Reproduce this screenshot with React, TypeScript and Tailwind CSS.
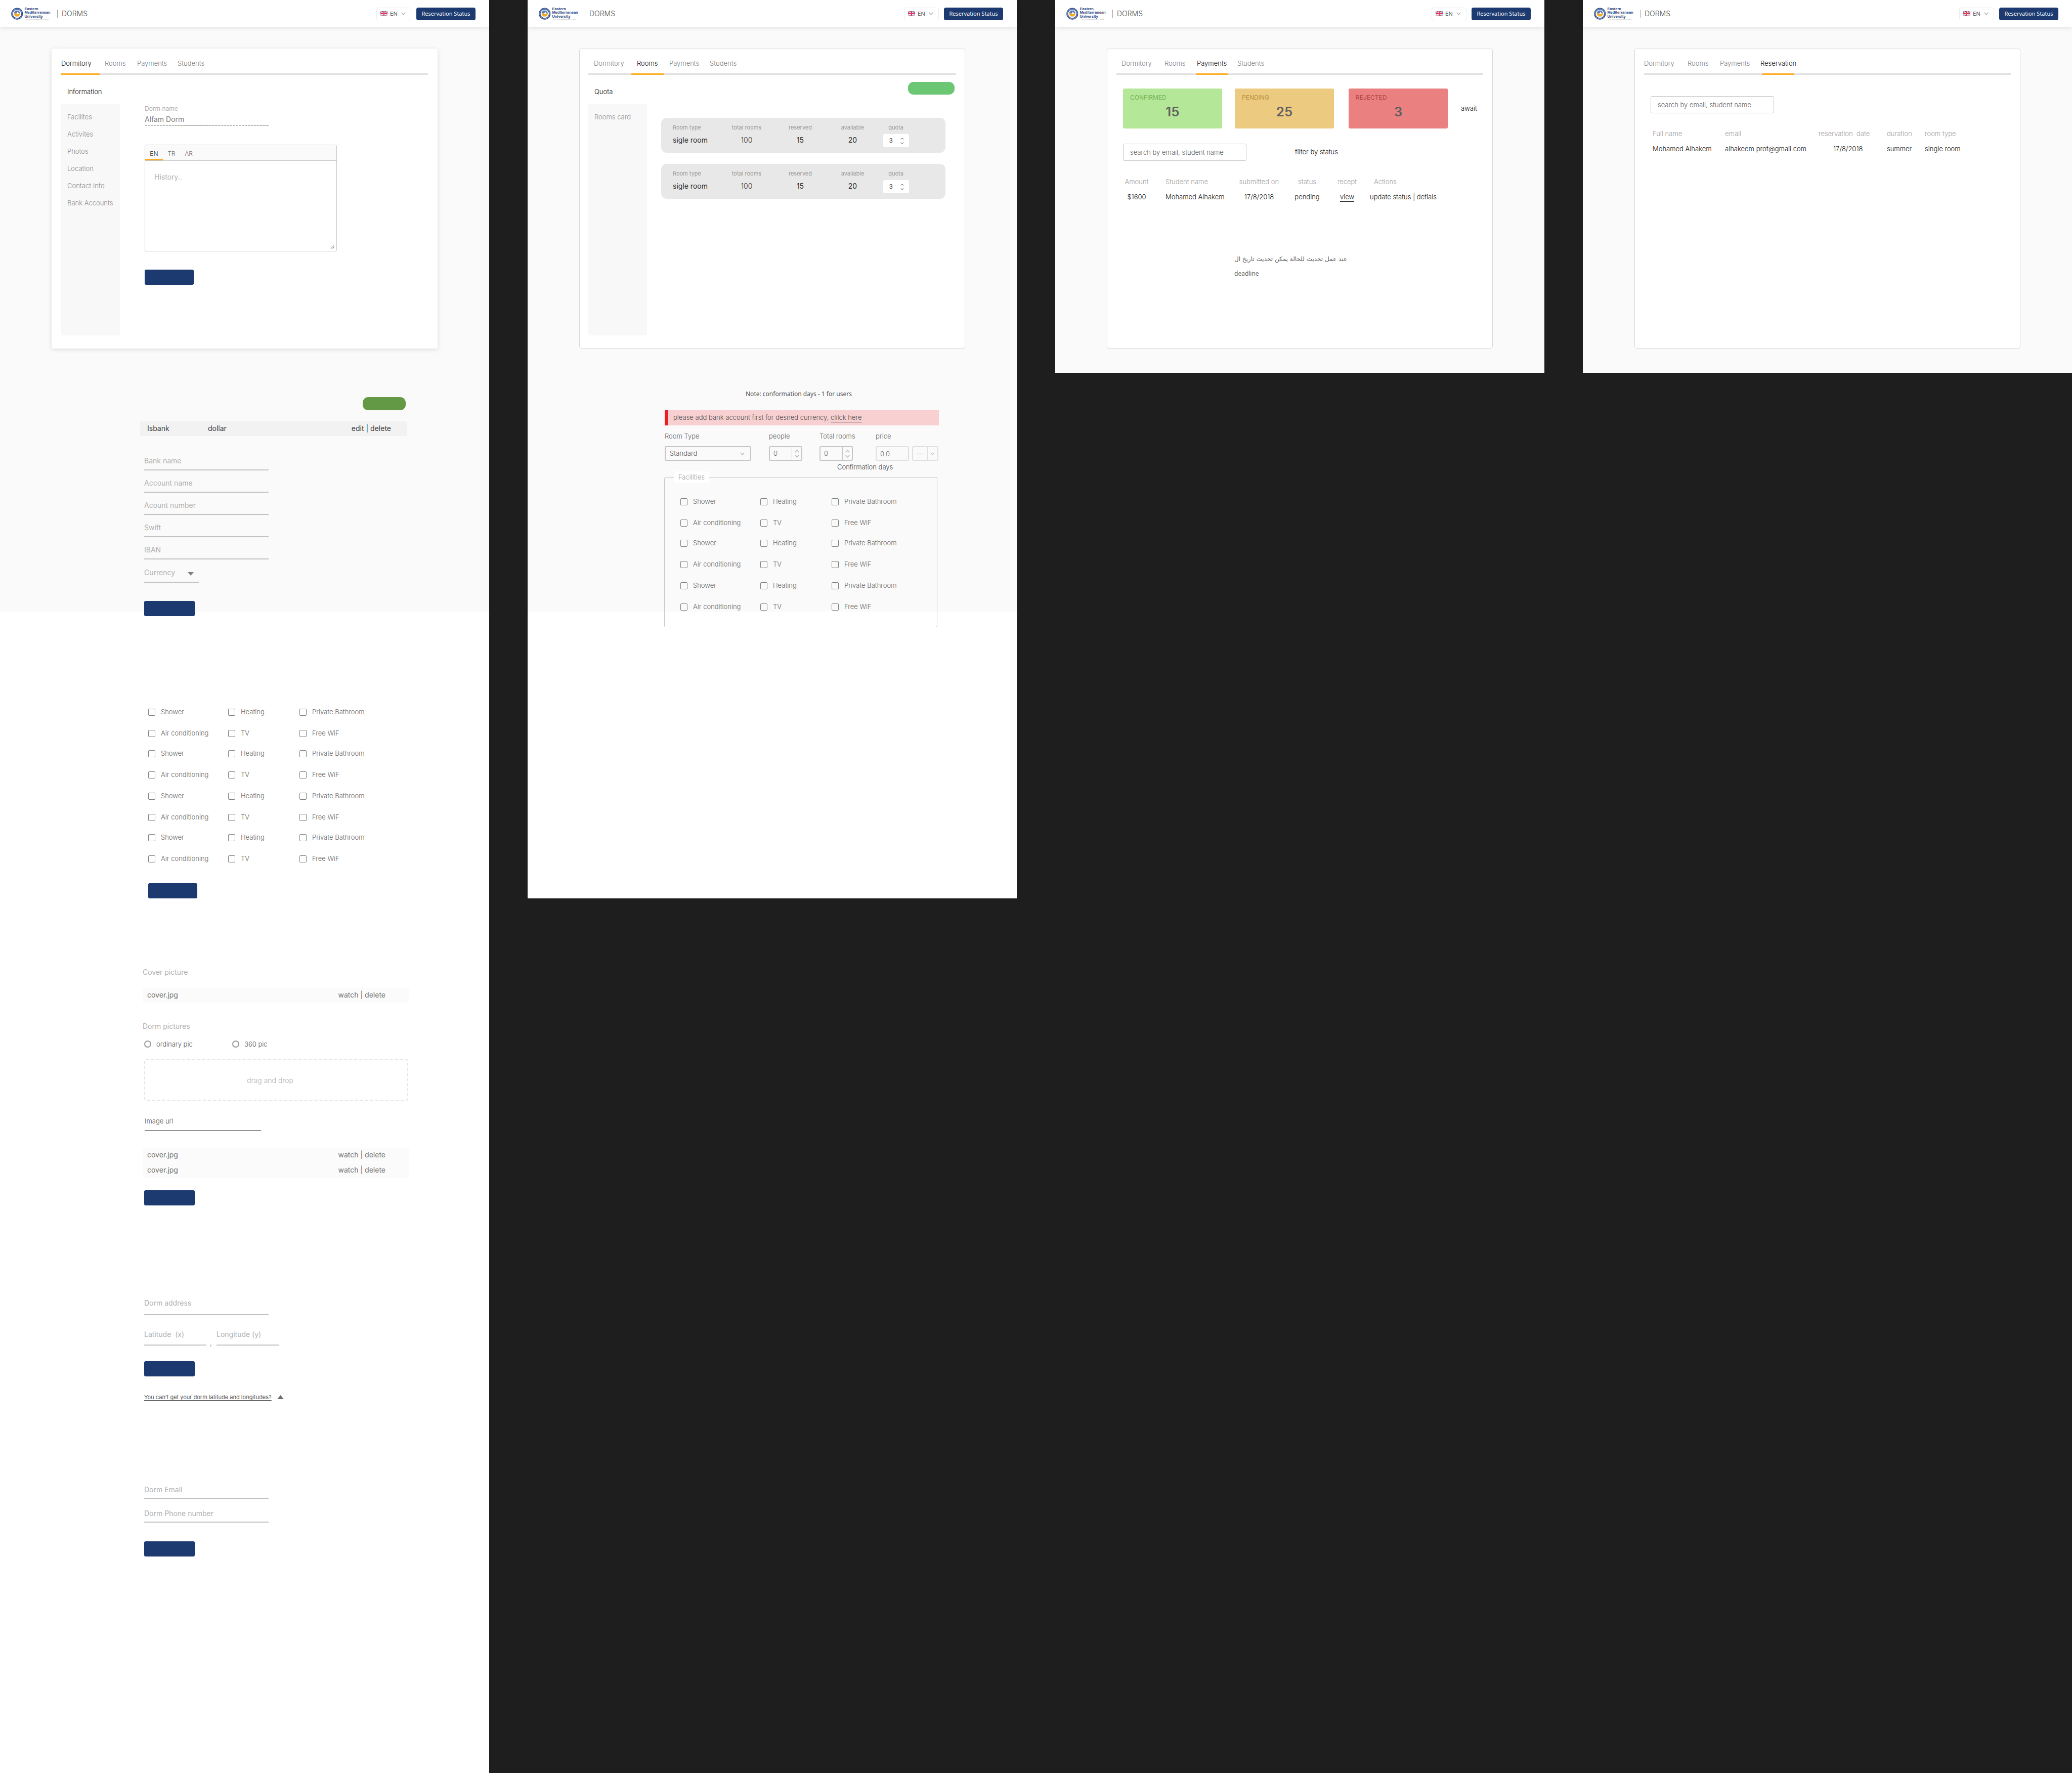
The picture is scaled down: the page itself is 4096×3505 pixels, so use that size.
import React from "react";

const FACILITY_ROWS = [
  ["Shower", "Heating", "Private Bathroom"],
  ["Air conditioning", "TV", "Free WiF"],
];

function Chevron({ up, className }: { up?: boolean; className: string }) {
  return (
    <svg viewBox="0 0 12 8" className={`shrink-0 ${className}`} fill="none" stroke="currentColor" strokeWidth="1.800" aria-hidden="true">
      <path d={up ? "M1 7l5-5.500L11 7" : "M1 1l5 5.500L11 1"} />
    </svg>
  );
}

function Emblem() {
  return (
    <svg viewBox="0 0 105 36" className="h-[27px] w-[79px] shrink-0" role="img" aria-label="Eastern Mediterranean University">
      <circle cx="15.5" cy="17.5" r="15.4" fill="#2d4f8e" />
      <circle cx="15.5" cy="17.5" r="13" fill="none" stroke="#a9b9d8" strokeWidth="1.600" strokeDasharray="1.4 1" />
      <circle cx="15.5" cy="17.5" r="11" fill="#fff" />
      <path d="M11 9h9l4 7-2 3-5-7-3 5h-6l-1-2z" fill="#5b7cb8" />
      <path d="M8.500 13.500l3.500 5h7l3-4 2 3.500-4 6.500h-9l-4-6.500z" fill="#f7a81c" />
      <rect x="12.500" y="25.300" width="6" height="1" fill="#5b7cb8" />
      <g fill="#1f3f80" fontFamily="'Liberation Sans', Arial, sans-serif" fontWeight="700" fontSize="10">
        <text x="35" y="7.800">Eastern</text>
        <text x="35" y="17.800">Mediterranean</text>
        <text x="35" y="27.600">University</text>
      </g>
      <text x="35" y="35" fill="#a8a8a8" fontFamily="'Liberation Serif', serif" fontStyle="italic" fontSize="5">
        “For Your International Career”
      </text>
    </svg>
  );
}

function Flag() {
  return (
    <svg viewBox="0 0 28 20" className="h-[10px] w-[14px] shrink-0" aria-hidden="true">
      <rect width="28" height="20" fill="#4a5fae" />
      <path d="M0 0l28 20M28 0L0 20" stroke="#fff" strokeWidth="4" />
      <path d="M0 0l28 20M28 0L0 20" stroke="#e8455a" strokeWidth="1.600" />
      <path d="M14 0v20M0 10h28" stroke="#fff" strokeWidth="6.500" />
      <path d="M14 0v20M0 10h28" stroke="#e8354c" strokeWidth="4" />
    </svg>
  );
}

function Header() {
  return (
    <header className="flex h-[54px] items-center bg-white pl-[22px] pr-[27px] shadow-[0_1px_8px_rgba(0,0,0,0.12)]">
      <a href="#home" className="flex items-center">
        <Emblem />
        <span className="ml-3 h-4 w-px bg-[#a0a0a0]" />
        <span className="ml-2 text-[14px] font-light leading-5 text-[#505050]">DORMS</span>
      </a>
      <label className="ml-auto flex h-[25px] w-[69px] items-center rounded-sm border border-[#ececec] px-[7px]">
        <Flag />
        <select aria-label="Language" className="ml-[5px] w-[22px] appearance-none bg-transparent text-[11px] text-[#555] outline-none">
          <option>EN</option>
        </select>
        <Chevron className="h-[6px] w-[9px] text-[#aaa]" />
      </label>
      <button className="ml-[10px] h-[25px] w-[117px] rounded-sm bg-[#1c3a6f] font-['Noto_Sans',sans-serif] text-[11px] text-white">
        Reservation Status
      </button>
    </header>
  );
}

type Tab = { label: string; cell: string };

function Tabs({ tabs, active, bar }: { tabs: Tab[]; active: number; bar: string }) {
  return (
    <nav className="pt-[19px]">
      <div className="flex text-[13px] font-light leading-5 text-[#808080]">
        {tabs.map((t, i) => (
          <a key={t.label} href={"#" + t.label} className={`${t.cell} ${i === active ? "text-[#111]" : ""}`}>
            {t.label}
          </a>
        ))}
      </div>
      <div className="mt-[10px] h-[3px] bg-[#e0e0e0]">
        <div className={`h-full bg-[#fdad26] ${bar}`} />
      </div>
    </nav>
  );
}

function Board({ className, children }: { className?: string; children: React.ReactNode }) {
  return (
    <section className={`min-w-0 flex-1 bg-[linear-gradient(#fafafa_1209px,#ffffff_1209px)] ${className ?? ""}`}>
      <Header />
      {children}
    </section>
  );
}

function Card({ className, children }: { className: string; children: React.ReactNode }) {
  return <div className={`mx-[102px] mt-[42px] min-h-[593px] rounded-[4px] bg-white ${className}`}>{children}</div>;
}

function SideMenu({ title, items }: { title: string; items: string[] }) {
  return (
    <aside className="w-[116px] shrink-0 text-[13px] font-light leading-5">
      <h2 className="mt-[23px] pl-3 text-[#111]">{title}</h2>
      <ul className="mt-[14px] h-[458px] space-y-[14px] bg-[#f8f8f8] pl-3 pt-4 text-[#8c8c8c]">
        {items.map((i) => (
          <li key={i}>
            <a href={"#" + i} className="whitespace-nowrap">{i}</a>
          </li>
        ))}
      </ul>
    </aside>
  );
}

function SubmitButton({ label, className }: { label: string; className: string }) {
  return <button aria-label={label} className={`block h-[30px] rounded-[3px] bg-[#1c3a6f] ${className}`} />;
}

function Field({ label, className }: { label: string; className: string }) {
  return (
    <input
      aria-label={label}
      placeholder={label}
      className={`block rounded-none border-b-2 border-[#c2c2c2] bg-transparent text-[14px] leading-5 text-[#606060] outline-none placeholder:text-[#b0b0b0] ${className}`}
    />
  );
}

function Facilities({ id, rows }: { id: string; rows: number }) {
  return (
    <div>
      {Array.from({ length: rows }, (_, r) => (
        <div
          key={r}
          className={`grid grid-cols-[158px_141px_1fr] ${r === 0 ? "" : r % 4 === 2 ? "mt-5" : "mt-[22px]"}`}
        >
          {FACILITY_ROWS[r % 2].map((name, c) => (
            <label key={c} htmlFor={`${id}-${r}-${c}`} className="flex h-5 items-center whitespace-nowrap text-[13px] font-light text-[#666]">
              <input id={`${id}-${r}-${c}`} type="checkbox" className="mr-[11px] size-[14px] shrink-0 appearance-none rounded-[2px] border border-[#808080]" />
              {name}
            </label>
          ))}
        </div>
      ))}
    </div>
  );
}

function FileRow({ className }: { className?: string }) {
  return (
    <li className={`flex h-[29px] items-center bg-[#fbfbfb] pb-[2px] pl-[9px] pr-[47px] text-[14px] text-[#707070] ${className ?? ""}`}>
      <span className="mr-auto">cover.jpg</span>
      <button>watch</button>
      <span className="whitespace-pre"> | </span>
      <button>delete</button>
    </li>
  );
}

function DormitoryBoard() {
  return (
    <Board className="self-stretch">
      <Card className="px-[19px] shadow-[0_2px_10px_rgba(0,0,0,0.12)]">
        <Tabs
          active={0}
          bar="w-[76px]"
          tabs={[
            { label: "Dormitory", cell: "w-[86px]" },
            { label: "Rooms", cell: "w-[64px]" },
            { label: "Payments", cell: "w-[80px]" },
            { label: "Students", cell: "w-[80px]" },
          ]}
        />
        <div className="flex">
          <SideMenu title="Information" items={["Facilites", "Activites", "Photos", "Location", "Contact Info", "Bank Accounts"]} />
          <form className="ml-[49px] mt-[57px]">
            <label htmlFor="dorm-name" className="block text-[12px] leading-5 text-[#adadad]">Dorm name</label>
            <input
              id="dorm-name"
              defaultValue="Alfam Dorm"
              className="block h-[22px] w-[246px] pb-[2px] text-[14px] text-[#808080] outline-none"
            />
            <div className="h-[2px] w-[246px] bg-[repeating-linear-gradient(90deg,#bcbcbc_0px,#bcbcbc_5px,#ffffff_5px,#ffffff_6px)]" />
            <div className="relative mt-[37px] w-[380px] rounded-[3px] border border-[#c6c6c6]">
              <div className="flex h-[31px] border-b border-[#c6c6c6] bg-[#fafafa] text-[12px] font-light text-[#707070]">
                <button type="button" className="w-[35px] border-b-[3px] border-[#fdad26] pt-[7px] text-[#222]">EN</button>
                <button type="button" className="w-[34px] pt-1">TR</button>
                <button type="button" className="w-[34px] pt-1">AR</button>
              </div>
              <textarea aria-label="History" placeholder="History.." className="block h-[178px] w-full resize-none px-[18px] pt-[22px] text-[14px] leading-5 outline-none placeholder:text-[#b0b0b0]" />
              <svg viewBox="0 0 8 8" className="absolute bottom-1 right-1 size-2" aria-hidden="true">
                <path d="M1 7.500L7.500 1M4.500 7.500l3-3" stroke="#555" strokeWidth="0.900" />
              </svg>
            </div>
            <SubmitButton label="Save information" className="mt-9 w-[97px]" />
          </form>
        </div>
      </Card>

      <div className="ml-[277px] mr-[162px] mt-24">
        <button aria-label="Add bank account" className="ml-auto mr-[3px] block h-[26px] w-[85px] rounded-[11px] bg-[#639844]" />
        <div className="mt-[22px] flex h-[29px] items-center bg-[#f2f2f2] pb-[2px] pl-[14px] pr-8 text-[14px] text-[#3c3c3c]">
          <span className="w-[120px]">Isbank</span>
          <span className="mr-auto">dollar</span>
          <button>edit</button>
          <span className="whitespace-pre"> | </span>
          <button>delete</button>
        </div>
        <form className="ml-2 mt-[38px]">
          <div className="space-y-[14px]">
            {["Bank name", "Account name", "Acount number", "Swift", "IBAN"].map((f) => (
              <Field key={f} label={f} className="h-[30px] w-[246px] pb-2" />
            ))}
          </div>
          <div className="relative mt-4 w-[108px]">
            <select aria-label="Currency" className="block h-[30px] w-full appearance-none border-b-2 border-[#c2c2c2] bg-transparent pb-2 text-[14px] leading-5 text-[#b0b0b0] outline-none">
              <option>Currency</option>
            </select>
            <svg viewBox="0 0 12 7" className="pointer-events-none absolute right-[10px] top-[9px] h-[7px] w-3" aria-hidden="true">
              <path d="M0 0h12L6 7z" fill="#808080" />
            </svg>
          </div>
          <SubmitButton label="Save bank account" className="mt-9 w-[100px]" />
        </form>
      </div>

      <form className="ml-[293px] mt-[180px]">
        <Facilities id="dorm" rows={8} />
        <SubmitButton label="Save facilities" className="mt-[38px] w-[97px]" />
      </form>

      <form className="ml-[282px] mr-[158px] mt-[136px]">
        <h3 className="text-[14px] leading-5 text-[#b0b0b0]">Cover picture</h3>
        <ul className="mt-[21px]">
          <FileRow />
        </ul>
        <h3 className="mt-[37px] text-[14px] leading-5 text-[#b0b0b0]">Dorm pictures</h3>
        <div className="ml-[3px] mt-[15px] flex text-[13px] font-light leading-5 text-[#555]">
          <label className="flex w-[174px] items-center">
            <input type="radio" name="pic" className="mr-[10px] size-[14px] appearance-none rounded-full border-2 border-[#999]" />
            ordinary pic
          </label>
          <label className="flex items-center">
            <input type="radio" name="pic" className="mr-[10px] size-[14px] appearance-none rounded-full border-2 border-[#999]" />
            360 pic
          </label>
        </div>
        <div className="ml-[3px] mr-[2px] mt-5 flex h-[82px] items-center justify-center rounded-[4px] border-2 border-dashed border-[#e6e6e6] pr-6 text-[14px] font-light text-[#b0b0b0]">
          drag and drop
        </div>
        <input
          aria-label="Image url"
          placeholder="Image url"
          className="ml-1 mt-[30px] block h-[30px] w-[230px] border-b-2 border-[#929292] bg-transparent pb-2 text-[13px] font-light outline-none placeholder:text-[#555]"
        />
        <ul className="mt-[33px]">
          <FileRow />
          <FileRow className="mt-px" />
        </ul>
        <SubmitButton label="Save photos" className="ml-[3px] mt-[25px] w-[100px]" />
      </form>

      <form className="ml-[285px] mt-[183px]">
        <Field label="Dorm address" className="h-[34px] w-[246px] pb-[14px]" />
        <div className="mt-7 flex items-end text-[#999]">
          <Field label="Latitude  (x)" className="h-8 w-[123px] pb-3" />
          <span className="w-5 pl-[7px] text-[14px] leading-3">,</span>
          <Field label="Longitude (y)" className="h-8 w-[123px] pb-3" />
        </div>
        <SubmitButton label="Save location" className="mt-[31px] w-[100px]" />
        <a href="#help" className="mt-[31px] flex items-center text-[11px] leading-5 text-[#555]">
          <span className="underline decoration-1 underline-offset-2">You can’t get your dorm latitude and longitudes?</span>
          <svg viewBox="0 0 13 8" className="ml-[11px] h-2 w-[13px]" aria-hidden="true">
            <path d="M0 8h13L6.500 0z" fill="#6b6b6b" />
          </svg>
        </a>
      </form>

      <form className="ml-[285px] mt-[163px]">
        <Field label="Dorm Email" className="h-7 w-[246px] pb-2" />
        <Field label="Dorm Phone number" className="mt-[19px] h-7 w-[246px] pb-2" />
        <SubmitButton label="Save contact info" className="mt-[37px] w-[100px]" />
      </form>
    </Board>
  );
}

function QuotaCard({ id }: { id: string }) {
  return (
    <div className="grid h-[69px] grid-cols-[94px_104px_108px_99px_72px] rounded-[11px] bg-[#e8e8e8] pl-[23px] pt-[11px] text-center">
      {["Room type", "total rooms", "reserved", "avaliable"].map((l, i) => (
        <div key={l} className={i === 0 ? "text-left" : ""}>
          <div className="text-[11px] leading-4 text-[#999]">{l}</div>
          <div className={`mt-[5px] text-[14px] leading-6 ${i === 1 ? "font-light text-[#333]" : "text-[#2c2c2c]"}`}>
            {["sigle room", "100", "15", "20"][i]}
          </div>
        </div>
      ))}
      <div>
        <label htmlFor={id} className="block text-[11px] leading-4 text-[#999]">quota</label>
        <div className="mx-auto mt-[5px] flex h-[26px] w-[51px] items-center rounded-[3px] bg-white pl-3 pr-[10px]">
          <input id={id} type="text" inputMode="numeric" defaultValue="3" className="w-4 min-w-0 bg-transparent text-left text-[12px] text-[#444] outline-none" />
          <span className="ml-auto flex flex-col gap-[5px] text-[#333]">
            <button aria-label="Increase quota"><Chevron up className="h-1 w-[7px]" /></button>
            <button aria-label="Decrease quota"><Chevron className="h-1 w-[7px]" /></button>
          </span>
        </div>
      </div>
    </div>
  );
}

function Stepper({ id, label }: { id: string; label: string }) {
  return (
    <div>
      <label htmlFor={id} className="block leading-5">{label}</label>
      <div className="mt-[10px] flex h-[29px] w-[66px] rounded-[3px] border-2 border-[#c6c6c6]">
        <input id={id} type="text" inputMode="numeric" defaultValue="0" className="w-[43px] min-w-0 bg-transparent pl-[7px] outline-none" />
        <span className="flex flex-1 flex-col items-center justify-center gap-1 border-l border-[#c6c6c6] text-[#b3b3b3]">
          <button type="button" aria-label={"Increase " + label} className="flex"><Chevron up className="h-[6px] w-[9px]" /></button>
          <button type="button" aria-label={"Decrease " + label} className="flex"><Chevron className="h-[6px] w-[9px]" /></button>
        </span>
      </div>
    </div>
  );
}

function RoomsBoard() {
  return (
    <Board className="min-h-[1776px]">
      <Card className="px-[18px] outline outline-1 -outline-offset-1 outline-[#d8d8d8]">
        <Tabs
          active={1}
          bar="ml-[85px] w-[64px]"
          tabs={[
            { label: "Dormitory", cell: "ml-[11px] w-[85px]" },
            { label: "Rooms", cell: "w-[64px]" },
            { label: "Payments", cell: "w-[80px]" },
            { label: "Students", cell: "w-[80px]" },
          ]}
        />
        <div className="flex">
          <SideMenu title="Quota" items={["Rooms card"]} />
          <div className="min-w-0 flex-1">
            <button aria-label="Save quota" className="ml-auto mr-[3px] mt-[14px] block h-[25px] w-[92px] rounded-[11px] bg-[#6bc774]" />
            <div className="ml-7 mr-[21px] mt-[46px] space-y-[22px]">
              <QuotaCard id="quota-1" />
              <QuotaCard id="quota-2" />
            </div>
          </div>
        </div>
      </Card>

      <p className="ml-[431px] mt-20 font-['Noto_Sans',sans-serif] text-[12px] leading-5 text-[#555]">
        Note: conformation days - 1 for users
      </p>
      <p className="ml-[271px] mr-[154px] mt-[22px] h-[30px] border-l-[6px] border-[#ed1c24] bg-[#f8d0d1] pl-[11px] text-[13px] font-light leading-[28px] text-[#505050]">
        please add bank account first for desired currency,{" "}
        <a href="#bank" className="underline decoration-1 underline-offset-4">clilck here</a>
      </p>
      <form>
        <div className="ml-[271px] mt-[11px] grid grid-cols-[206px_100px_111px_72px_52px] text-[13px] font-light text-[#666]">
          <div>
            <label htmlFor="room-type" className="block leading-5">Room Type</label>
            <div className="relative mt-[10px] w-[171px]">
              <select id="room-type" className="block h-[29px] w-full appearance-none rounded-[3px] border-2 border-[#c6c6c6] bg-transparent pl-2 text-[#555] outline-none">
                <option>Standard</option>
              </select>
              <Chevron className="pointer-events-none absolute right-[13px] top-3 h-[6px] w-[9px] text-[#b3b3b3]" />
            </div>
          </div>
          <Stepper id="people" label="people" />
          <Stepper id="total-rooms" label="Total rooms" />
          <div>
            <label htmlFor="price" className="block leading-5">price</label>
            <input id="price" defaultValue="0.0" className="mt-[10px] block h-[29px] w-[66px] rounded-[3px] border-2 border-[#e0e0e0] bg-transparent pl-[7px] outline-none" />
          </div>
          <div className="relative mt-[30px] flex h-[29px] rounded-[3px] border-2 border-[#e0e0e0] text-[#c0c0c0]">
            <select aria-label="Price currency" className="w-full appearance-none bg-transparent pl-[7px] font-medium outline-none">
              <option>--</option>
            </select>
            <span className="pointer-events-none absolute inset-y-0 right-0 flex w-5 items-center justify-center border-l border-[#e0e0e0]">
              <Chevron className="h-[6px] w-[9px]" />
            </span>
          </div>
        </div>
        <p className="ml-[612px] mt-1 text-[13px] font-light leading-[17px] text-[#444]">Confirmation days</p>
        <fieldset className="ml-[270px] mr-[157px] rounded-[3px] border border-[#c8c8c8] pb-[29px] pl-[31px]">
          <legend className="-ml-[12px] h-[23px] bg-white px-2 text-[13px] font-light leading-[23px] text-[#a0a0a0]">Facilities</legend>
          <div className="pt-[27px]">
            <Facilities id="room" rows={6} />
          </div>
        </fieldset>
      </form>
    </Board>
  );
}

function SearchBox() {
  return (
    <input
      type="search"
      aria-label="Search"
      placeholder="search by email, student name"
      className="h-[34px] w-[244px] rounded-[3px] border border-[#c8c8c8] px-[13px] text-[13px] font-light outline-none placeholder:text-[#606060]"
    />
  );
}

const STATS = [
  { label: "CONFIRMED", value: 15, box: "bg-[#b5e798]", text: "text-[#74b356]" },
  { label: "PENDING", value: 25, box: "ml-[25px] bg-[#eccb80]", text: "text-[#b8923f]" },
  { label: "REJECTED", value: 3, box: "ml-[29px] bg-[#ea8080]", text: "text-[#b24646]" },
];

function PaymentsBoard() {
  return (
    <Board className="min-h-[737px]">
      <Card className="px-[19px] outline outline-1 -outline-offset-1 outline-[#d8d8d8]">
        <Tabs
          active={2}
          bar="ml-[157px] w-[63px]"
          tabs={[
            { label: "Dormitory", cell: "ml-[10px] w-[85px]" },
            { label: "Rooms", cell: "w-[64px]" },
            { label: "Payments", cell: "w-[80px]" },
            { label: "Students", cell: "w-[80px]" },
          ]}
        />
        <div className="ml-[13px]">
          <div className="mt-[27px] flex items-center">
            {STATS.map((s) => (
              <div key={s.label} className={`h-[79px] w-[196px] rounded-[3px] px-[14px] pt-2 ${s.box}`}>
                <div className={`text-[12px] leading-5 ${s.text}`}>{s.label}</div>
                <div className="mt-1 text-center text-[26px] font-semibold leading-7 text-[#606060]">{s.value}</div>
              </div>
            ))}
            <span className="ml-[26px] text-[13px] font-light text-[#111]">await</span>
          </div>
          <div className="mt-[30px] flex items-center">
            <SearchBox />
            <button className="ml-24 text-[13px] font-light text-[#111]">filter by status</button>
          </div>
          <table className="mt-[31px] w-full table-fixed text-[13px] leading-5">
            <colgroup>
              <col className="w-[54px]" />
              <col className="w-[162px]" />
              <col className="w-[106px]" />
              <col className="w-[84px]" />
              <col className="w-[74px]" />
              <col />
            </colgroup>
            <thead className="whitespace-nowrap text-[#a0a0a0]">
              <tr>
                <th className="font-light">Amount</th>
                <th className="pl-[30px] text-left font-light">Student name</th>
                <th className="font-light">submitted on</th>
                <th className="font-light">status</th>
                <th className="font-light">recept</th>
                <th className="pl-4 text-left font-light">Actions</th>
              </tr>
            </thead>
            <tbody className="whitespace-nowrap text-center font-light text-[#111]">
              <tr>
                <td className="pt-[10px]">$1600</td>
                <td className="pl-[30px] pt-[10px] text-left">Mohamed Alhakem</td>
                <td className="pt-[10px]">17/8/2018</td>
                <td className="pt-[10px]">pending</td>
                <td className="pt-[10px]">
                  <a href="#view" className="underline decoration-1 underline-offset-4">view</a>
                </td>
                <td className="pl-2 pt-[10px] text-left">
                  <button>update status</button> | <button>detials</button>
                </td>
              </tr>
            </tbody>
          </table>
          <p className="ml-[220px] mt-[98px] leading-[27px] text-[#606060]">
            <span lang="ar" className="font-['DejaVu_Sans',sans-serif] text-[12px]">عند عمل تحديث للحالة يمكن تحديث تاريخ ال</span>
            <br />
            <span className="font-['Noto_Sans',sans-serif] text-[12px]">deadline</span>
          </p>
        </div>
      </Card>
    </Board>
  );
}

function ReservationBoard() {
  return (
    <Board className="min-h-[737px]">
      <Card className="px-[19px] outline outline-1 -outline-offset-1 outline-[#d8d8d8]">
        <Tabs
          active={3}
          bar="ml-[233px] w-[64px]"
          tabs={[
            { label: "Dormitory", cell: "w-[86px]" },
            { label: "Rooms", cell: "w-[64px]" },
            { label: "Payments", cell: "w-[80px]" },
            { label: "Reservation", cell: "w-[80px]" },
          ]}
        />
        <div className="ml-[13px] mt-[42px]">
          <SearchBox />
          <table className="mt-[30px] w-full table-fixed text-left text-[13px] leading-5">
            <colgroup>
              <col className="w-[147px]" />
              <col className="w-[185px]" />
              <col className="w-[135px]" />
              <col className="w-[75px]" />
              <col />
            </colgroup>
            <thead className="whitespace-nowrap text-[#a0a0a0]">
              <tr>
                <th className="pl-1 font-light">Full name</th>
                <th className="font-light">email</th>
                <th className="whitespace-pre font-light">reservation  date</th>
                <th className="font-light">duration</th>
                <th className="font-light">room type</th>
              </tr>
            </thead>
            <tbody className="whitespace-nowrap font-light text-[#111]">
              <tr>
                <td className="pl-1 pt-[10px]">Mohamed Alhakem</td>
                <td className="pt-[10px]">alhakeem.prof@gmail.com</td>
                <td className="pl-[29px] pt-[10px]">17/8/2018</td>
                <td className="pt-[10px]">summer</td>
                <td className="pt-[10px]">single room</td>
              </tr>
            </tbody>
          </table>
        </div>
      </Card>
    </Board>
  );
}

export default function App() {
  return (
    <main className="flex min-h-screen items-start gap-[76px] bg-[#1e1e1e] font-['Inter',sans-serif]">
      <DormitoryBoard />
      <RoomsBoard />
      <PaymentsBoard />
      <ReservationBoard />
    </main>
  );
}
